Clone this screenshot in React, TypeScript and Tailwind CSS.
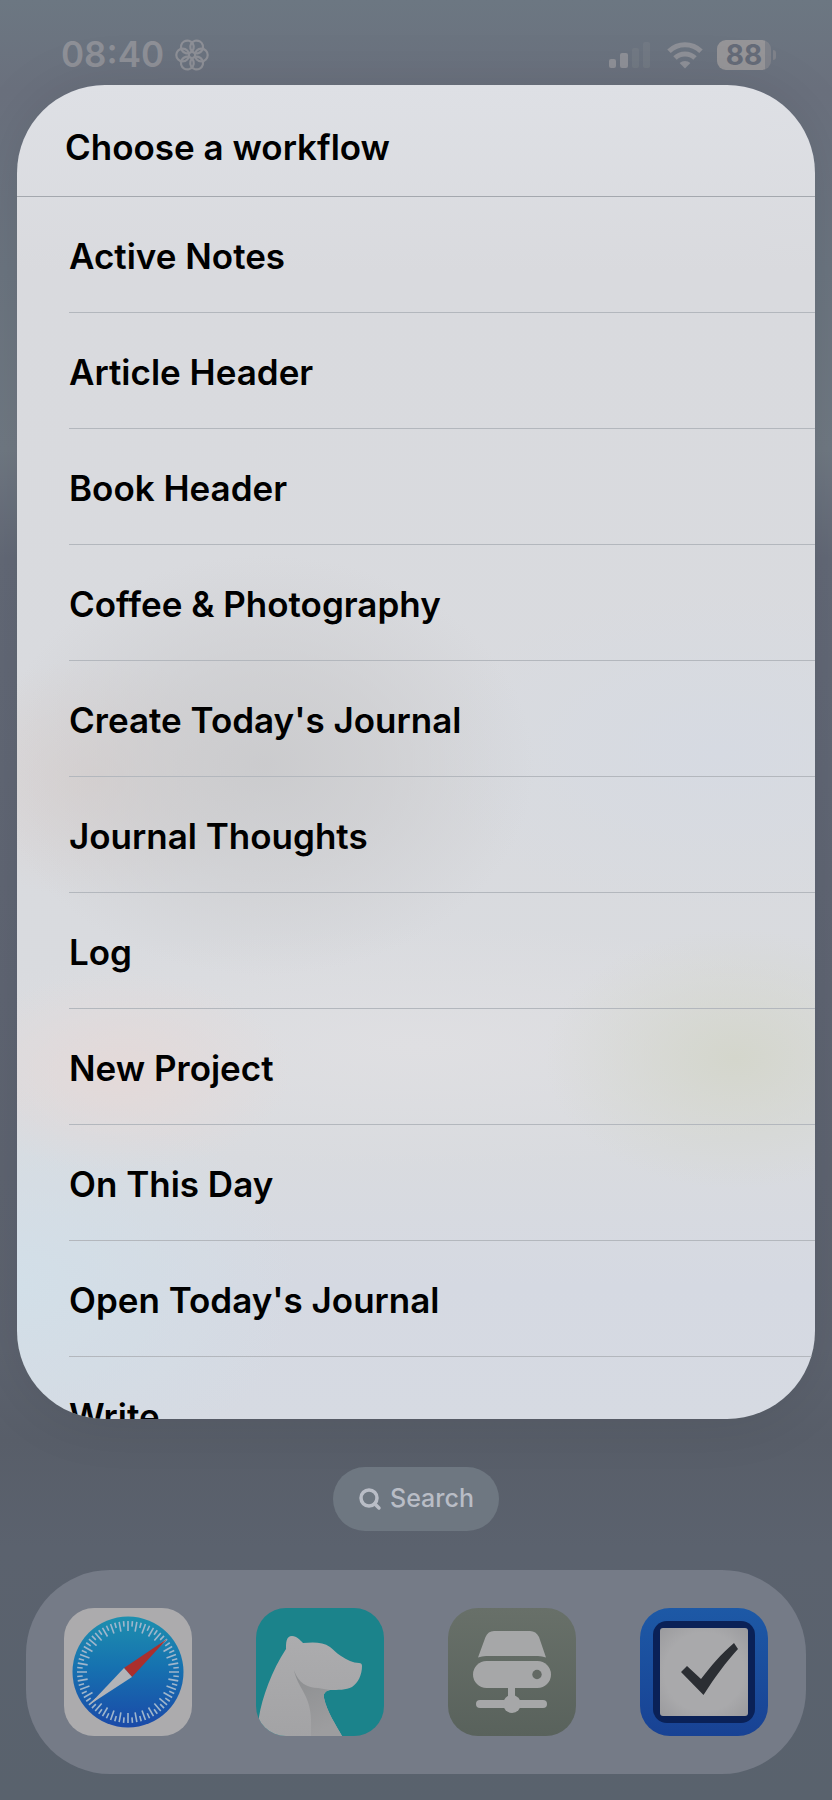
import { Search } from 'lucide-react';

const workflows = [
    'Active Notes',
    'Article Header',
    'Book Header',
    'Coffee & Photography',
    "Create Today's Journal",
    'Journal Thoughts',
    'Log',
    'New Project',
    'On This Day',
    "Open Today's Journal",
    'Write',
];

function FocusIcon() {
    return (
        <svg viewBox="-18 -18 36 36" className="size-9" fill="none" stroke="currentColor" strokeWidth="2.2">
            {[0, 60, 120, 180, 240, 300].map((angle) => (
                <circle key={angle} cx="9.3" cy="0" r="6.4" transform={`rotate(${angle})`} />
            ))}
        </svg>
    );
}

function SignalIcon() {
    return (
        <svg viewBox="0 0 44 28" className="h-7 w-11" fill="currentColor">
            <rect x="0" y="18" width="7" height="9" rx="2" />
            <rect x="11" y="12" width="8" height="15" rx="2" />
            <rect x="23" y="7" width="7" height="20" rx="2" opacity="0.22" />
            <rect x="34" y="1" width="7" height="26" rx="2" opacity="0.22" />
        </svg>
    );
}

function WifiIcon() {
    return (
        <svg viewBox="0 0 36 28" className="h-7 w-9" fill="none" stroke="currentColor" strokeWidth="5">
            <path d="M2 10.2a23 23 0 0 1 32 0" />
            <path d="M8 17a14.5 14.5 0 0 1 20 0" />
            <path d="M18 27.5l-5.4-5.4a7.8 7.8 0 0 1 10.8 0z" fill="currentColor" stroke="none" />
        </svg>
    );
}

function Battery() {
    return (
        <div className="flex items-center gap-0.5">
            <div className="flex h-[30px] w-[54px] items-center justify-center rounded-[9px] bg-linear-to-r from-[#969598] from-88% to-[#7f828a] to-88% text-[28px] leading-none font-bold text-[#656b78]">
                88
            </div>
            <div className="h-2.5 w-[3px] rounded-r-full bg-[#7f828a]" />
        </div>
    );
}

function SafariIcon() {
    return (
        <svg viewBox="0 0 128 128" className="size-full">
            <defs>
                <linearGradient id="safariDial" x1="0" y1="0" x2="0" y2="1">
                    <stop offset="0" stopColor="#1e8fae" />
                    <stop offset="0.45" stopColor="#1672b0" />
                    <stop offset="1" stopColor="#1a49a8" />
                </linearGradient>
            </defs>
            <rect width="128" height="128" fill="#acabad" />
            <circle cx="64" cy="64" r="55.5" fill="url(#safariDial)" />
            {Array.from({ length: 72 }, (_, i) => (
                <line
                    key={i}
                    x1="64"
                    x2="64"
                    y1="13"
                    y2={i % 2 ? 18.5 : 23}
                    stroke="#9fb6cc"
                    strokeWidth="1.6"
                    transform={`rotate(${i * 5} 64 64)`}
                />
            ))}
            <path d="M103 31L60 60L68 69Z" fill="#ab2f2d" />
            <path d="M25 97L60 60L68 69Z" fill="#b2b4b8" />
        </svg>
    );
}

function BearIcon() {
    return (
        <svg viewBox="0 0 128 128" className="size-full">
            <defs>
                <linearGradient id="bearNeck" x1="0" y1="0" x2="0.4" y2="1">
                    <stop offset="0" stopColor="#8c8e90" />
                    <stop offset="1" stopColor="#9d9d9f" />
                </linearGradient>
                <linearGradient id="bearBody" x1="0" y1="0" x2="0" y2="1">
                    <stop offset="0" stopColor="#acacae" />
                    <stop offset="1" stopColor="#a3a3a5" />
                </linearGradient>
            </defs>
            <rect width="128" height="128" fill="#1b838b" />
            <path
                d="M0 128L3 109C6 90 16 62 30 41C30 35 30 28 36 28C41 28 44 32 47 35C58 34 67 34 74 39C78 42 80 45 85 48C91 52 97 55 103 55C105 55 106 56 106 58C106 67 102 75 96 79C90 82 82 82 74 82C69 83 67 86 68 90C71 104 80 117 86 128Z"
                fill="url(#bearBody)"
            />
            <path
                d="M38 62C42 75 52 80 62 80L74 82C69 83 67 86 68 90C71 104 80 117 86 128H55C55 112 56 103 50 89C46 80 40 73 38 62Z"
                fill="url(#bearNeck)"
            />
        </svg>
    );
}

function DriveIcon() {
    return (
        <svg viewBox="0 0 128 128" className="size-full">
            <defs>
                <linearGradient id="driveBg" x1="0" y1="0" x2="0" y2="1">
                    <stop offset="0" stopColor="#687069" />
                    <stop offset="1" stopColor="#59625c" />
                </linearGradient>
            </defs>
            <rect width="128" height="128" fill="url(#driveBg)" />
            <g fill="#a6a7a8">
                <path d="M30 49.5L37.5 29Q40 23 46 23H82Q88 23 91 29L98 49.5Q94 48 90 48H38Q34 48 30 49.5Z" />
                <rect x="25" y="53" width="78" height="27" rx="13.5" />
                <rect x="60" y="79" width="7" height="14" />
                <rect x="28" y="92" width="71" height="8" rx="4" />
                <circle cx="64" cy="96" r="9" />
            </g>
            <circle cx="89" cy="66.5" r="4.7" fill="#636964" />
        </svg>
    );
}

function TasksIcon() {
    return (
        <svg viewBox="0 0 128 128" className="size-full">
            <defs>
                <linearGradient id="tasksFrame" x1="0" y1="0" x2="0" y2="1">
                    <stop offset="0" stopColor="#1d59a6" />
                    <stop offset="1" stopColor="#184294" />
                </linearGradient>
                <radialGradient id="tasksPaper" cx="0.5" cy="0.5" r="0.75">
                    <stop offset="0.6" stopColor="#a9a9ab" />
                    <stop offset="1" stopColor="#98989b" />
                </radialGradient>
            </defs>
            <rect width="128" height="128" fill="url(#tasksFrame)" />
            <rect x="13" y="13" width="102" height="102" rx="14" fill="#0a2157" />
            <rect x="20" y="20" width="88" height="88" rx="3" fill="url(#tasksPaper)" />
            <path d="M41 64L47 58L61 71C71 58 81 46 94 35L98 41C86 54 75 69 63.5 87Z" fill="#2b2e33" />
        </svg>
    );
}

const dockApps = [
    { name: 'Safari', icon: SafariIcon },
    { name: 'Bear', icon: BearIcon },
    { name: 'Drive', icon: DriveIcon },
    { name: 'Tasks', icon: TasksIcon },
];

export default function App() {
    return (
        <div className="flex h-screen flex-col bg-[linear-gradient(180deg,#6c7782_0%,#6a707d_5%,#6b7580_15%,#707983_25%,#636977_31%,#5f6573_55%,#5d636f_75%,#585e69_80%,#5b626e_86%,#59626d_100%)] font-['Inter',sans-serif]">
            {/* Status bar */}
            <header className="flex h-[85px] shrink-0 items-center justify-between pt-6 pr-14 pl-[61px] text-[#8e9097]">
                <div className="flex items-center gap-2.5">
                    <span className="text-[35px] font-semibold">08:40</span>
                    <FocusIcon />
                </div>
                <div className="flex items-center gap-3.5">
                    <SignalIcon />
                    <WifiIcon />
                    <Battery />
                </div>
            </header>

            {/* Workflow picker */}
            <main className="mx-[17px] flex min-h-0 flex-1 flex-col overflow-hidden rounded-[88px] bg-[#dadce0] bg-[radial-gradient(ellipse_270px_210px_at_31%_51%,#c9c9cbdd,#cbcbcd99_45%,transparent),radial-gradient(ellipse_170px_120px_at_10%_52%,#d8cfcdcc,transparent),radial-gradient(ellipse_170px_100px_at_13%_74%,#e4d9d8,transparent),radial-gradient(ellipse_190px_130px_at_90%_73%,#d4d6cc,transparent),radial-gradient(ellipse_280px_200px_at_0%_90%,#d2dfe8,transparent),radial-gradient(ellipse_300px_160px_at_88%_50%,#d6dae2,transparent),radial-gradient(ellipse_500px_120px_at_50%_72%,#dfdfe2,transparent),linear-gradient(180deg,#dee0e5_0%,#d9dade_14%,#d9dbdf_80%,#d5d9e2_90%,#d6dae2_100%)] shadow-[0_0_60px_#00000018]">
                <h1 className="flex h-28 shrink-0 items-center border-b border-[#a4a8ae] pt-3.5 pl-12 text-[35px] font-semibold text-black">
                    Choose a workflow
                </h1>
                <ul className="min-h-0 flex-1 overflow-y-auto pl-[52px] [scrollbar-width:none]">
                    {workflows.map((name) => (
                        <li key={name} className="border-b border-[#b3b7bd]">
                            <button type="button" className="flex h-[115px] w-full items-center pt-1 text-left text-[35px] font-semibold text-black">
                                {name}
                            </button>
                        </li>
                    ))}
                </ul>
            </main>

            <button
                type="button"
                className="mt-12 flex h-16 shrink-0 items-center gap-2 self-center rounded-full bg-[#6e7781] px-[25px] text-[25px] font-medium text-[#b9bdc6]"
            >
                <Search className="size-6" strokeWidth={3.5} />
                Search
            </button>

            {/* Dock */}
            <nav className="mx-[26px] mt-[39px] mb-[26px] flex shrink-0 justify-between rounded-[84px] bg-[#757b87] px-[38px] py-[38px]">
                {dockApps.map((app) => (
                    <button key={app.name} type="button" aria-label={app.name} className="size-32 overflow-hidden rounded-[30px]">
                        <app.icon />
                    </button>
                ))}
            </nav>
        </div>
    );
}
